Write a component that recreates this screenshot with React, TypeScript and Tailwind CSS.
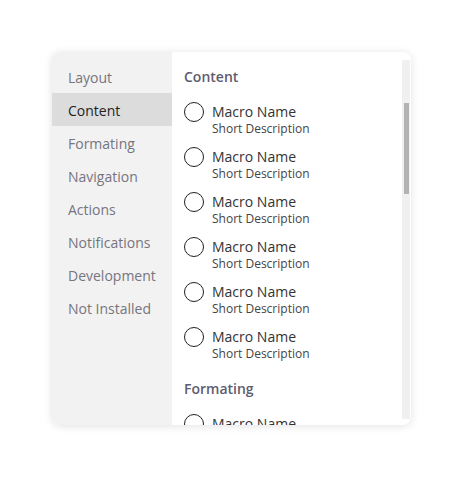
import React from "react";

const categories = [
  "Layout",
  "Content",
  "Formating",
  "Navigation",
  "Actions",
  "Notifications",
  "Development",
  "Not Installed",
];

const MacroItem = () => (
  <div className="flex items-start">
    <div className="mt-[-1px] w-5 h-5 rounded-full border-[1.5px] border-[#222] shrink-0" />
    <div className="ml-2 flex flex-col">
      <span className="text-[14px] leading-[18px] text-[#333]">Macro Name</span>
      <span className="text-[12px] leading-[16px] text-[#444]">Short Description</span>
    </div>
  </div>
);

const Section = ({ title, count }: { title: string; count: number }) => (
  <div className="flex flex-col">
    <div className="text-[14px] leading-5 font-semibold text-[#5e5c6e]">{title}</div>
    <div className="mt-4 flex flex-col gap-[11px]">
      {Array.from({ length: count }).map((_, i) => (
        <MacroItem key={i} />
      ))}
    </div>
  </div>
);

const App = () => {
  return (
    <div
      className="min-h-screen bg-white flex justify-center pt-[52px]"
      style={{ fontFamily: '"Open Sans", "Noto Sans", sans-serif' }}
    >
      <div className="w-[359px] h-[373px] bg-white rounded-lg shadow-[0_1px_8px_rgba(0,0,0,0.12)] flex overflow-hidden">
        <div className="w-[120px] bg-[#f2f2f2] pt-2 flex flex-col">
          {categories.map((c) => (
            <div
              key={c}
              className={
                c === "Content"
                  ? "h-[33px] pl-4 pt-px flex items-center text-[14px] bg-[#dcdcdc] text-[#1f1f1f]"
                  : "h-[33px] pl-4 pt-px flex items-center text-[14px] text-[#76757f]"
              }
            >
              {c}
            </div>
          ))}
        </div>
        <div className="flex-1 flex">
          <div className="flex-1 overflow-hidden pl-3 pt-[15px] flex flex-col gap-[17px]">
            <Section title="Content" count={6} />
            <Section title="Formating" count={2} />
          </div>
          <div className="w-2 mr-px mt-2 mb-[6px] bg-[#f0f0f0] flex justify-center">
            <div className="mt-[43px] w-[5px] h-[91px] bg-[#b3b3b6]" />
          </div>
        </div>
      </div>
    </div>
  );
};

export default App;
